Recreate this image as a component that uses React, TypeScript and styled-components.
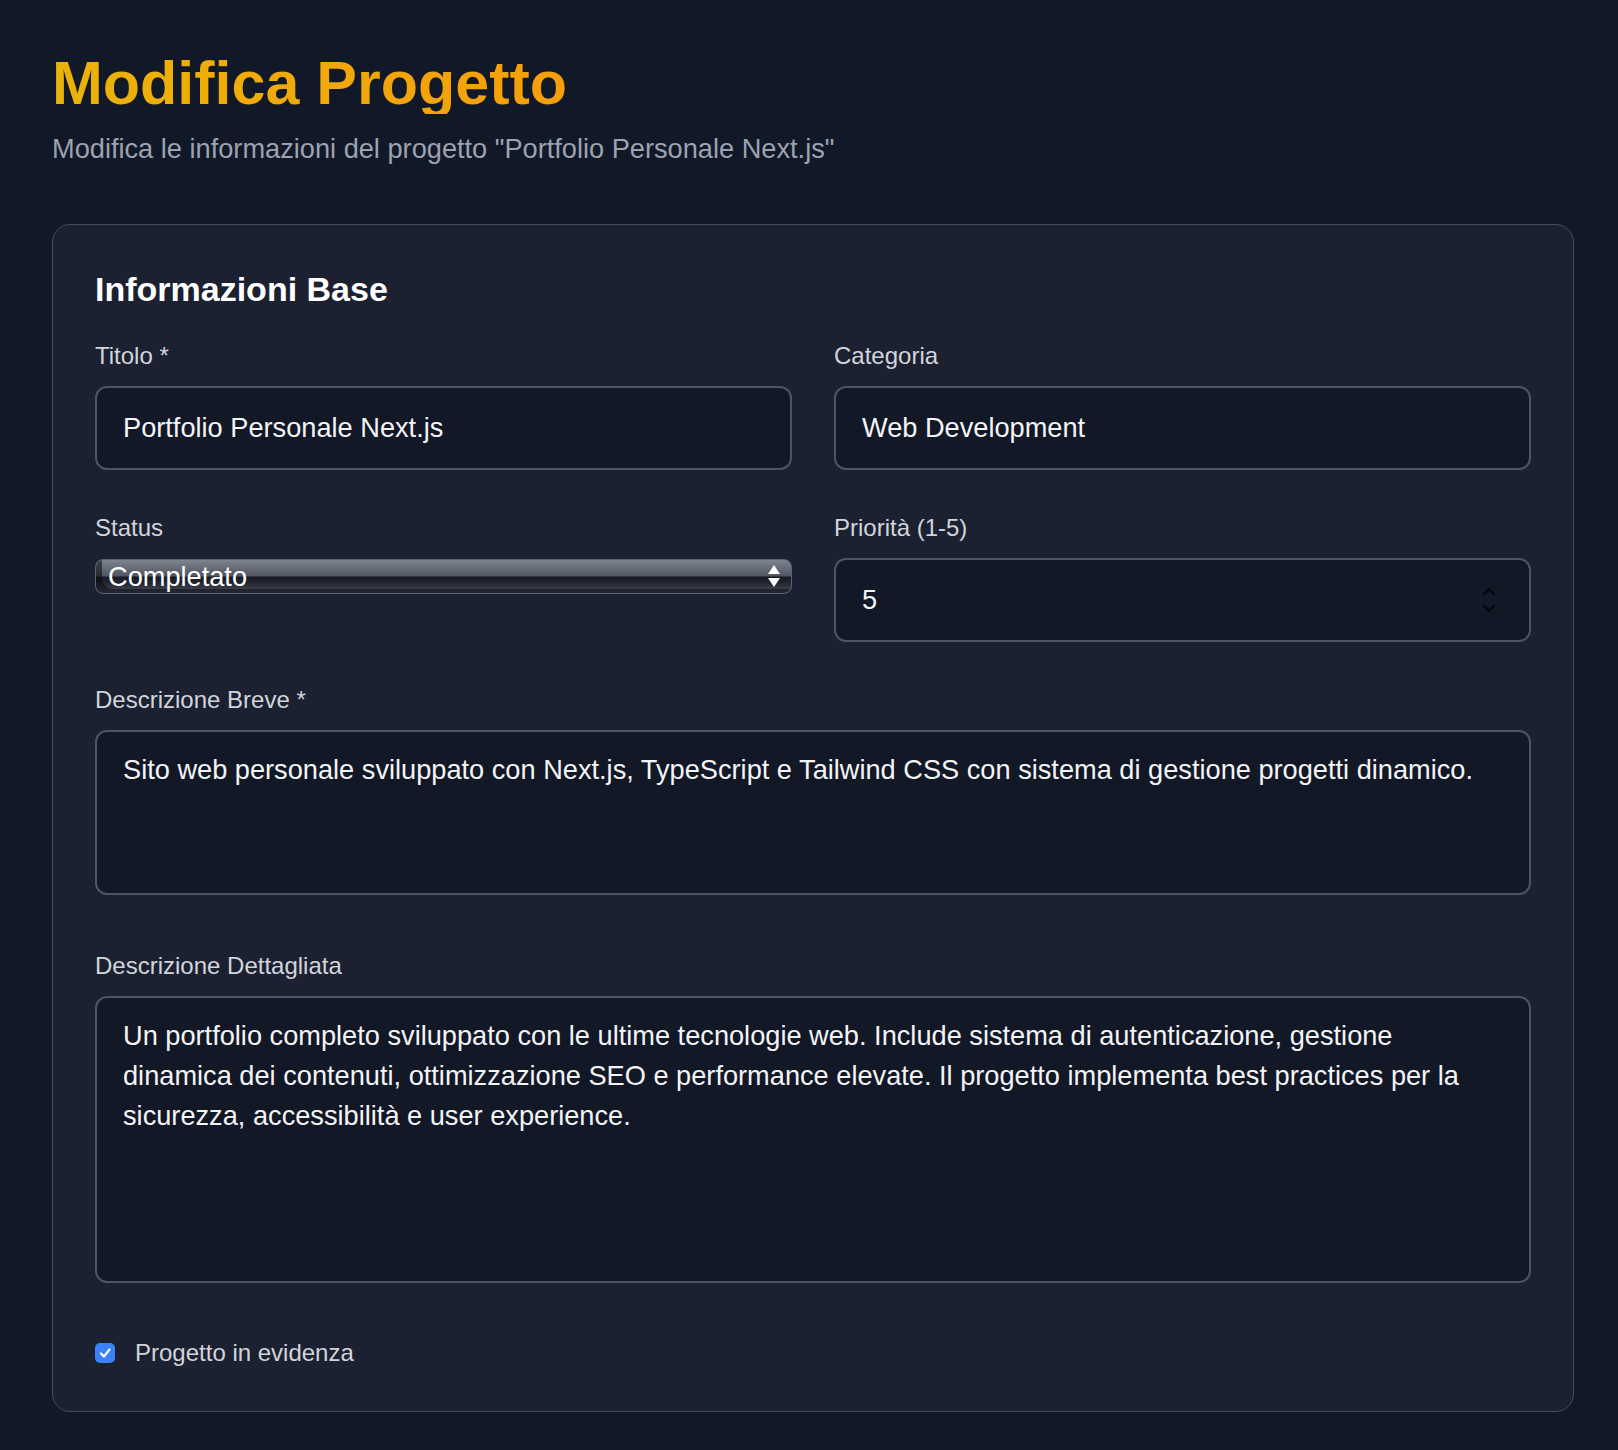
import styled, { createGlobalStyle } from "styled-components";

const GlobalStyle = createGlobalStyle`
  * {
    box-sizing: border-box;
  }

  html,
  body {
    margin: 0;
    background: #111827;
  }

  body {
    font-family: "Liberation Sans", Arial, sans-serif;
    color: #f3f4f6;
  }
`;

const Page = styled.main`
  min-height: 100vh;
  padding: 52px 44px 38px 52px;
`;

const Title = styled.h1`
  width: fit-content;
  margin: 0;
  font-size: 61px;
  line-height: 62px;
  font-weight: 700;
  background: linear-gradient(90deg, #eab308, #f59e0b);
  -webkit-background-clip: text;
  background-clip: text;
  color: transparent;
`;

const Subtitle = styled.p`
  margin: 19px 0 0;
  font-size: 27.2px;
  line-height: 32px;
  color: #9ca3af;
`;

const Card = styled.section`
  margin-top: 59px;
  padding: 42px;
  background: #1c2131;
  border: 1px solid #454d5d;
  border-radius: 18px;
`;

const CardTitle = styled.h2`
  margin: 0 0 29px;
  font-size: 34px;
  line-height: 44px;
  font-weight: 700;
  color: #ffffff;
`;

const Grid = styled.div`
  display: grid;
  grid-template-columns: 1fr 1fr;
  gap: 42px;
`;

const Field = styled.div<{ $wide?: boolean; $after?: number }>`
  display: flex;
  flex-direction: column;
  gap: 14px;
  grid-column: ${(p) => (p.$wide ? "1 / -1" : "auto")};
  padding-bottom: ${(p) => p.$after ?? 0}px;
`;

const Label = styled.label`
  font-size: 24px;
  line-height: 32px;
  color: #d1d5db;
`;

const Input = styled.input`
  height: 84px;
  width: 100%;
  padding: 0 26px;
  font-family: inherit;
  font-size: 27.2px;
  color: #f3f4f6;
  background: #121826;
  border: 2px solid #4b5563;
  border-radius: 12px;
  outline: none;
  -moz-appearance: textfield;

  &::-webkit-inner-spin-button,
  &::-webkit-outer-spin-button {
    -webkit-appearance: none;
    margin: 0;
  }
`;

const TextArea = styled.textarea<{ $height: number }>`
  display: block;
  width: 100%;
  height: ${(p) => p.$height}px;
  padding: 18px 26px;
  font-family: inherit;
  font-size: 27.2px;
  line-height: 40px;
  color: #f3f4f6;
  background: #121826;
  border: 2px solid #4b5563;
  border-radius: 12px;
  outline: none;
  resize: none;
  overflow: hidden;
`;

const Control = styled.div`
  position: relative;
`;

const Select = styled.select`
  display: block;
  width: 100%;
  height: 35px;
  margin-top: 1px;
  padding: 0 32px 0 12px;
  font-family: inherit;
  font-size: 27.2px;
  line-height: 33px;
  color: #ffffff;
  border: 1px solid #5b6270;
  border-radius: 8px;
  appearance: none;
  -webkit-appearance: none;
  outline: none;
  background: linear-gradient(
    180deg,
    #7d838f 0%,
    #666c78 25%,
    #505662 48%,
    #161a24 52%,
    #232833 72%,
    #4c525e 100%
  );
  box-shadow: inset 10px -8px 0 -4px rgba(8, 10, 16, 0.55);
`;

const SelectArrows = styled.svg`
  position: absolute;
  right: 12px;
  top: 7px;
  width: 12px;
  height: 22px;
  pointer-events: none;
`;

const Spinner = styled.svg`
  position: absolute;
  right: 34px;
  top: 50%;
  transform: translateY(-50%);
  width: 16px;
  height: 28px;
  pointer-events: none;
`;

const CheckRow = styled.label`
  grid-column: 1 / -1;
  display: flex;
  align-items: center;
  gap: 20px;
  height: 32px;
  font-size: 24px;
  color: #d1d5db;
`;

const CheckBox = styled.span`
  display: inline-flex;
  align-items: center;
  justify-content: center;
  width: 20px;
  height: 20px;
  border-radius: 5px;
  background: #3b82f6;
`;

const longText =
  "Un portfolio completo sviluppato con le ultime tecnologie web. Include sistema di autenticazione, gestione\n" +
  "dinamica dei contenuti, ottimizzazione SEO e performance elevate. Il progetto implementa best practices per la\n" +
  "sicurezza, accessibilità e user experience.";

export default function App() {
  return (
    <>
      <GlobalStyle />
      <Page>
        <Title>Modifica Progetto</Title>
        <Subtitle>Modifica le informazioni del progetto "Portfolio Personale Next.js"</Subtitle>

        <Card>
          <CardTitle>Informazioni Base</CardTitle>
          <Grid>
            <Field>
              <Label>Titolo *</Label>
              <Input defaultValue="Portfolio Personale Next.js" />
            </Field>
            <Field>
              <Label>Categoria</Label>
              <Input defaultValue="Web Development" />
            </Field>

            <Field>
              <Label>Status</Label>
              <Control>
                <Select defaultValue="completato">
                  <option value="in-corso">In corso</option>
                  <option value="completato">Completato</option>
                  <option value="pausa">In pausa</option>
                </Select>
                <SelectArrows viewBox="0 0 12 22">
                  <polygon points="6,0 12,9 0,9" fill="#ffffff" />
                  <polygon points="0,13 12,13 6,22" fill="#ffffff" />
                </SelectArrows>
              </Control>
            </Field>
            <Field>
              <Label>Priorità (1-5)</Label>
              <Control>
                <Input type="number" min={1} max={5} defaultValue={5} />
                <Spinner viewBox="0 0 16 28" fill="none" stroke="#050608" strokeWidth="2">
                  <polyline points="2,9 8,3 14,9" />
                  <polyline points="2,19 8,25 14,19" />
                </Spinner>
              </Control>
            </Field>

            <Field $wide $after={13}>
              <Label>Descrizione Breve *</Label>
              <TextArea
                $height={165}
                defaultValue="Sito web personale sviluppato con Next.js, TypeScript e Tailwind CSS con sistema di gestione progetti dinamico."
              />
            </Field>

            <Field $wide $after={12}>
              <Label>Descrizione Dettagliata</Label>
              <TextArea $height={287} defaultValue={longText} />
            </Field>

            <CheckRow>
              <CheckBox>
                <svg width="14" height="14" viewBox="0 0 14 14" fill="none">
                  <polyline
                    points="3,7.5 6,10.5 11.5,3.5"
                    stroke="#ffffff"
                    strokeWidth="2.2"
                    strokeLinecap="round"
                    strokeLinejoin="round"
                  />
                </svg>
              </CheckBox>
              Progetto in evidenza
            </CheckRow>
          </Grid>
        </Card>
      </Page>
    </>
  );
}
